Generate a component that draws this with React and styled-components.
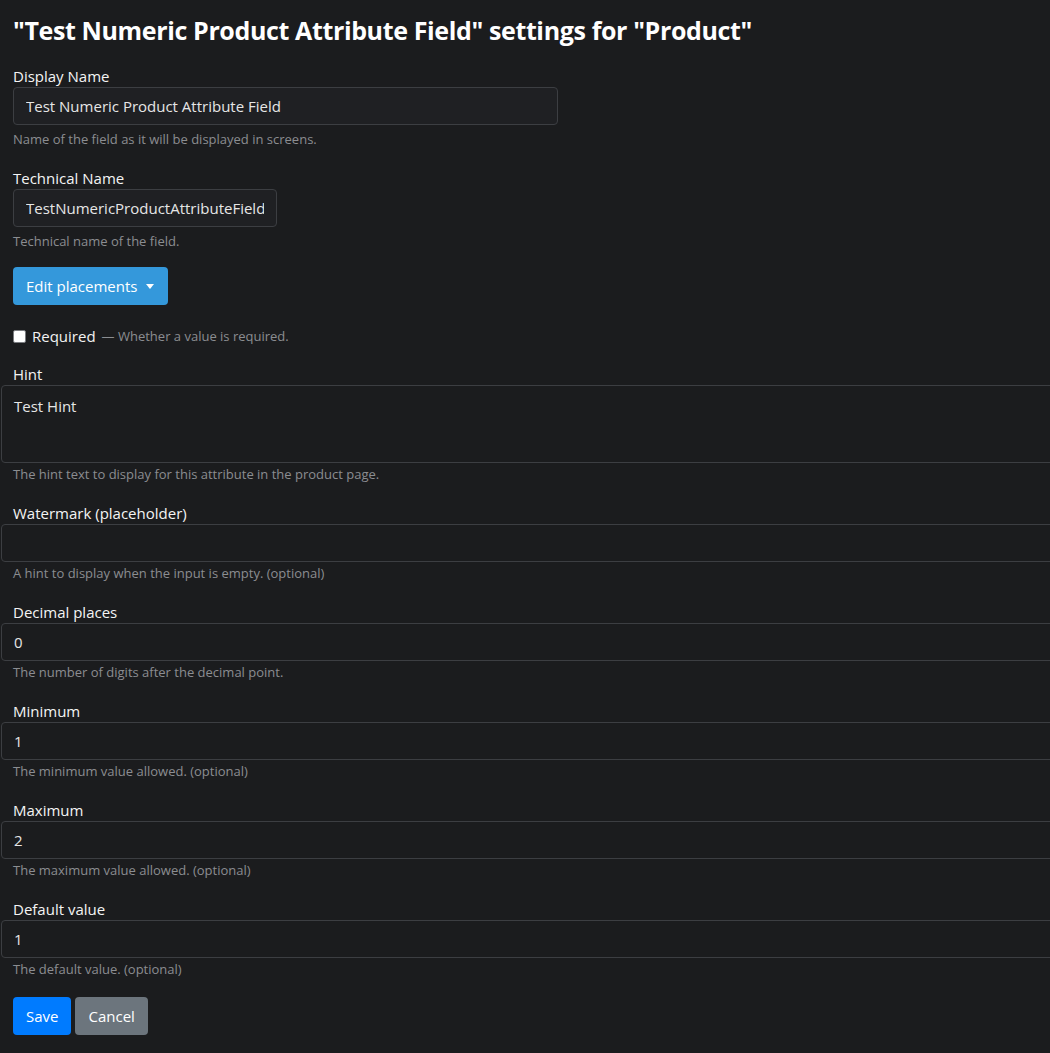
import React from "react";
import styled, { createGlobalStyle } from "styled-components";

const GlobalStyle = createGlobalStyle`
  html, body {
    margin: 0;
    padding: 0;
    background: #1b1c1e;
    overflow: hidden;
  }
  body {
    font-family: "Open Sans", "Noto Sans", sans-serif;
    color: #f2f2f2;
  }
`;

const Page = styled.div`
  padding: 0 0 0 13px;
  min-height: 1053px;
  box-sizing: border-box;
`;

const Title = styled.h1`
  margin: 0;
  padding: 12px 0 17px;
  font-size: 25px;
  line-height: 36px;
  font-weight: 700;
  color: #ffffff;
  letter-spacing: -0.37px;
`;

const Group = styled.div`
  margin-bottom: ${p => (p.$loose ? "16px" : "18px")};
`;

const Label = styled.label`
  display: block;
  font-size: 15px;
  line-height: 22px;
  color: #f4f4f4;
`;

const TextInput = styled.input`
  display: block;
  box-sizing: border-box;
  height: 38px;
  padding: 0 12px;
  font-family: inherit;
  font-size: 15px;
  color: #e6e6e6;
  background: ${p => (p.$wide ? "#1b1c1e" : "#1f2023")};
  border: 1px solid #3c3e42;
  border-radius: 4px;
  outline: none;
  width: ${p => (p.$wide ? "1100px" : p.$w || "545px")};
  margin-left: ${p => (p.$wide ? "-12px" : "0")};
`;

const TextArea = styled.textarea`
  display: block;
  box-sizing: border-box;
  height: 78px;
  width: 1100px;
  margin-left: -12px;
  padding: 9px 12px 8px;
  font-family: inherit;
  font-size: 15px;
  line-height: 22px;
  color: #e6e6e6;
  background: #1b1c1e;
  border: 1px solid #3c3e42;
  border-radius: 4px;
  resize: none;
  outline: none;
`;

const Help = styled.div`
  margin-top: ${p => (p.$tight ? "1px" : "4px")};
  font-size: 13px;
  line-height: 20px;
  color: #8b8d91;
`;

const DropButton = styled.button`
  display: inline-flex;
  align-items: center;
  gap: 9px;
  height: 38px;
  padding: 0 14px 0 13px;
  margin-bottom: 20px;
  font-family: inherit;
  font-size: 15px;
  color: #ffffff;
  background: #3498db;
  border: none;
  border-radius: 4px;
  &::after {
    content: "";
    border-top: 5px solid #ffffff;
    border-left: 4px solid transparent;
    border-right: 4px solid transparent;
    margin-top: 1px;
  }
`;

const CheckRow = styled.div`
  display: flex;
  align-items: center;
  gap: 6px;
  margin-bottom: 16px;
  font-size: 15px;
  line-height: 22px;
`;

const Box = styled.span`
  width: 11px;
  height: 11px;
  background: #ffffff;
  border: 1px solid #7a7c80;
  border-radius: 2px;
`;

const Dim = styled.span`
  font-size: 13px;
  color: #8b8d91;
`;

const Actions = styled.div`
  display: flex;
  gap: 4px;
  margin-top: 16px;
`;

const Btn = styled.button`
  height: 38px;
  padding: 0 13px;
  font-family: inherit;
  font-size: 15px;
  color: #ffffff;
  background: ${p => (p.$secondary ? "#6c757d" : "#007bff")};
  border: none;
  border-radius: 4px;
`;

const wideFields = [
  { label: "Watermark (placeholder)", value: "", help: "A hint to display when the input is empty. (optional)" },
  { label: "Decimal places", value: "0", help: "The number of digits after the decimal point." },
  { label: "Minimum", value: "1", help: "The minimum value allowed. (optional)" },
  { label: "Maximum", value: "2", help: "The maximum value allowed. (optional)" },
  { label: "Default value", value: "1", help: "The default value. (optional)" },
];

export default function App() {
  return (
    <Page>
      <GlobalStyle />
      <Title>"Test Numeric Product Attribute Field" settings for "Product"</Title>

      <Group>
        <Label>Display Name</Label>
        <TextInput defaultValue="Test Numeric Product Attribute Field" />
        <Help>Name of the field as it will be displayed in screens.</Help>
      </Group>

      <Group $loose>
        <Label>Technical Name</Label>
        <TextInput $w="264px" defaultValue="TestNumericProductAttributeField" />
        <Help>Technical name of the field.</Help>
      </Group>

      <DropButton>Edit placements</DropButton>

      <CheckRow>
        <Box />
        <span>Required</span>
        <Dim>— Whether a value is required.</Dim>
      </CheckRow>

      <Group>
        <Label>Hint</Label>
        <TextArea defaultValue="Test Hint" />
        <Help $tight>The hint text to display for this attribute in the product page.</Help>
      </Group>

      {wideFields.map(f => (
        <Group key={f.label}>
          <Label>{f.label}</Label>
          <TextInput $wide defaultValue={f.value} />
          <Help $tight>{f.help}</Help>
        </Group>
      ))}

      <Actions>
        <Btn>Save</Btn>
        <Btn $secondary>Cancel</Btn>
      </Actions>
    </Page>
  );
}
